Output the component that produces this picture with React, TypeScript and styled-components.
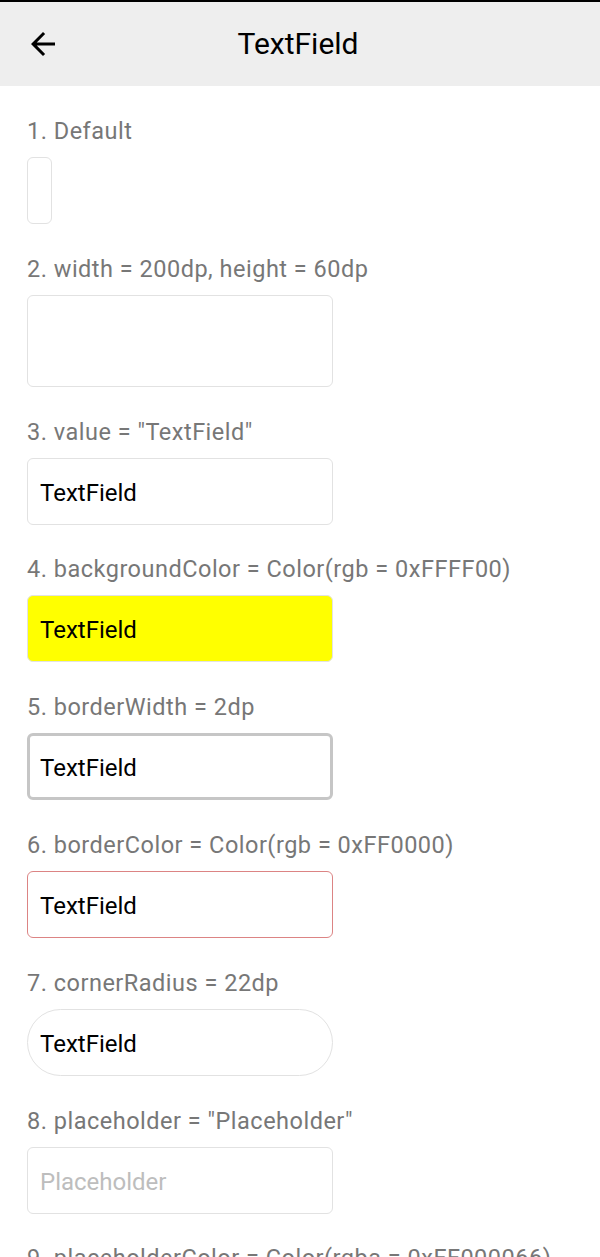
import React from "react";
import styled, { createGlobalStyle } from "styled-components";

const GlobalStyle = createGlobalStyle`
  html, body {
    margin: 0;
    padding: 0;
    background: #ffffff;
  }
  body {
    font-family: Roboto, "Noto Sans", sans-serif;
  }
`;

const Page = styled.div`
  width: 600px;
  height: 1257px;
  overflow: hidden;
  background: #ffffff;
  display: flex;
  flex-direction: column;
`;

const Header = styled.header`
  flex: none;
  height: 84px;
  border-top: 2px solid #000000;
  background: #eeeeee;
  display: grid;
  grid-template-columns: 1fr auto 1fr;
  align-items: center;
`;

const BackButton = styled.button`
  justify-self: start;
  margin-left: 25px;
  width: 36px;
  height: 36px;
  padding: 0;
  border: none;
  background: transparent;
  display: flex;
  align-items: center;
  justify-content: center;
  color: #000000;
`;

const Title = styled.h1`
  margin: 0;
  font-family: Roboto, sans-serif;
  font-weight: 400;
  font-size: 30px;
  line-height: 36px;
  color: #000000;
  transform: translateX(-2px);
`;

const Content = styled.main`
  display: flex;
  flex-direction: column;
  gap: 31.8px;
  padding: 32px 0 0 27px;
`;

const Section = styled.section`
  display: flex;
  flex-direction: column;
  align-items: flex-start;
  gap: 13px;
`;

const Label = styled.div`
  font-family: Roboto, sans-serif;
  font-size: 23.5px;
  letter-spacing: 0.5px;
  line-height: 26px;
  color: #777777;
  white-space: nowrap;
`;

type FieldProps = {
  $w?: number;
  $h?: number;
  $bg?: string;
  $bw?: number;
  $bc?: string;
  $r?: number;
  $ph?: string;
};

const Field = styled.input<FieldProps>`
  box-sizing: border-box;
  width: ${(p) => p.$w ?? 306}px;
  height: ${(p) => p.$h ?? 67}px;
  margin: 0;
  padding: 3px 0 0 ${(p) => 13 - (p.$bw ?? 1)}px;
  background: ${(p) => p.$bg ?? "#ffffff"};
  border: ${(p) => p.$bw ?? 1}px solid ${(p) => p.$bc ?? "#e2e2e2"};
  border-radius: ${(p) => p.$r ?? 6}px;
  font-family: Roboto, sans-serif;
  font-size: 24px;
  color: #000000;
  outline: none;
  &::placeholder {
    color: ${(p) => p.$ph ?? "#bdbdbd"};
    opacity: 1;
  }
`;

const ArrowBack = () => (
  <svg width="36" height="36" viewBox="0 0 24 24" fill="currentColor" aria-hidden="true">
    <path d="M20 11H7.83l5.59-5.59L12 4l-8 8 8 8 1.41-1.41L7.83 13H20v-2z" />
  </svg>
);

export default function App() {
  return (
    <>
      <GlobalStyle />
      <Page>
        <Header>
          <BackButton aria-label="Back">
            <ArrowBack />
          </BackButton>
          <Title>TextField</Title>
          <span />
        </Header>
        <Content>
          <Section>
            <Label>1. Default</Label>
            <Field readOnly $w={25} />
          </Section>
          <Section>
            <Label>2. width = 200dp, height = 60dp</Label>
            <Field readOnly $h={92} />
          </Section>
          <Section>
            <Label>3. value = "TextField"</Label>
            <Field readOnly value="TextField" />
          </Section>
          <Section>
            <Label>4. backgroundColor = Color(rgb = 0xFFFF00)</Label>
            <Field readOnly value="TextField" $bg="#ffff00" />
          </Section>
          <Section>
            <Label>5. borderWidth = 2dp</Label>
            <Field readOnly value="TextField" $bw={3} $bc="#c6c6c6" />
          </Section>
          <Section>
            <Label>6. borderColor = Color(rgb = 0xFF0000)</Label>
            <Field readOnly value="TextField" $bc="#dc8484" />
          </Section>
          <Section>
            <Label>7. cornerRadius = 22dp</Label>
            <Field readOnly value="TextField" $r={34} />
          </Section>
          <Section>
            <Label>8. placeholder = "Placeholder"</Label>
            <Field readOnly placeholder="Placeholder" />
          </Section>
          <Section>
            <Label>9. placeholderColor = Color(rgba = 0xFF000066)</Label>
            <Field readOnly placeholder="Placeholder" $ph="rgba(255,0,0,0.4)" />
          </Section>
        </Content>
      </Page>
    </>
  );
}
